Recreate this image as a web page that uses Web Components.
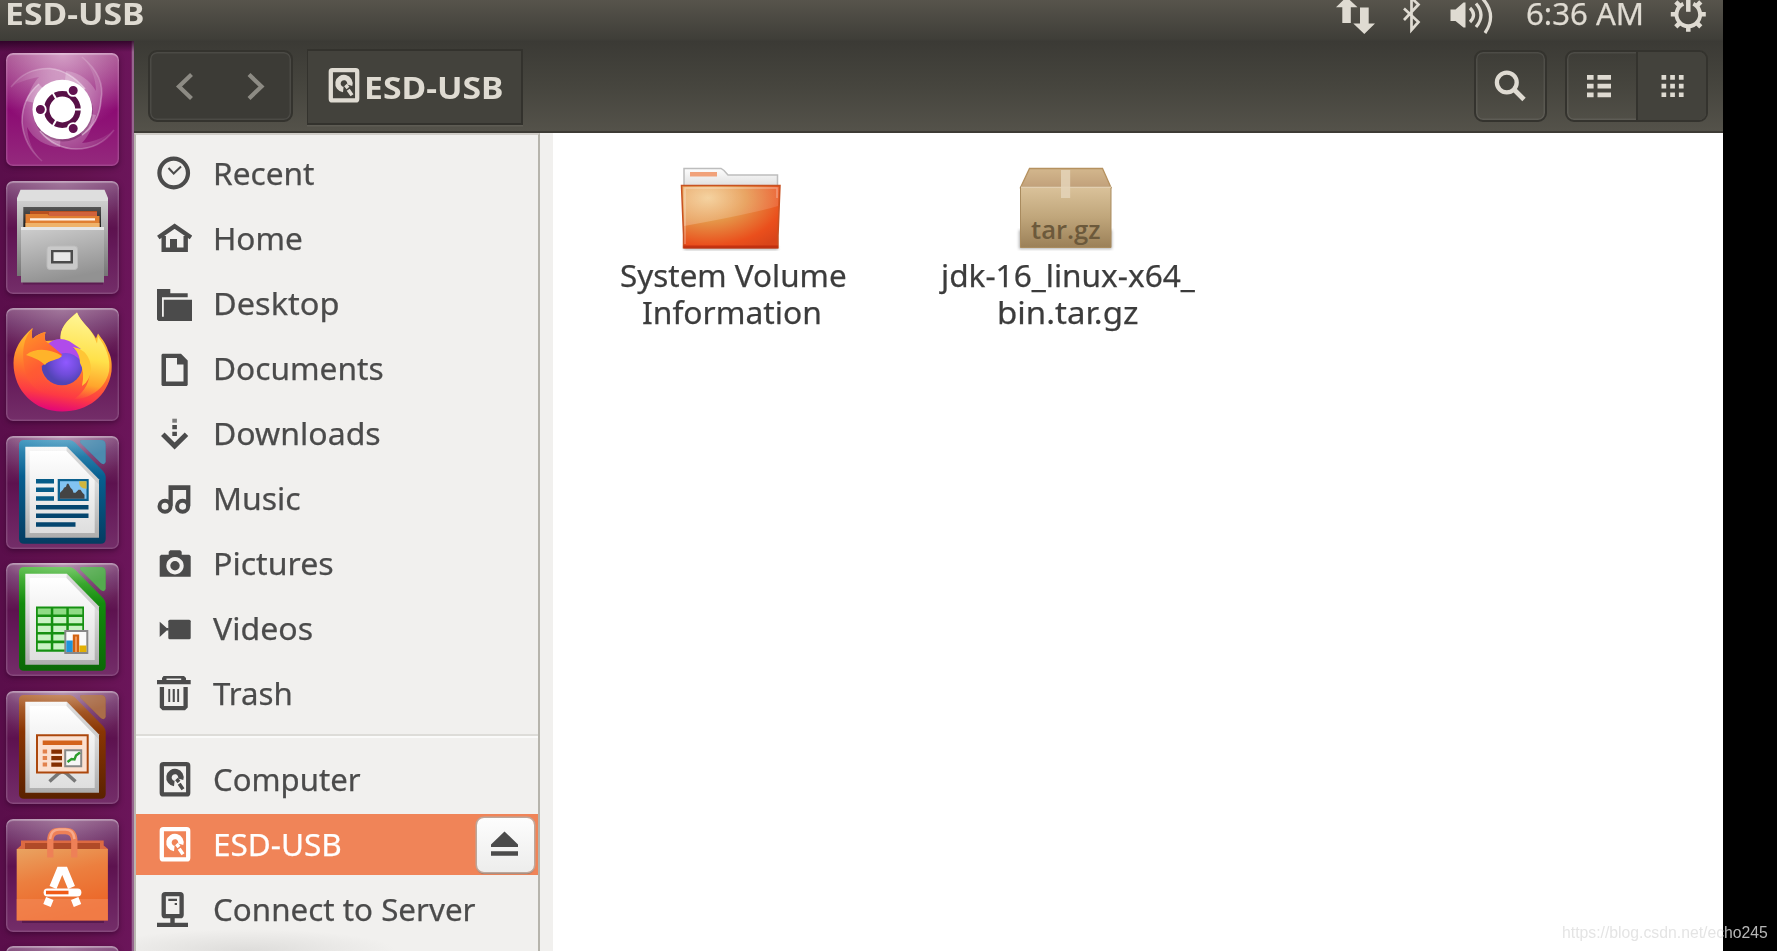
<!DOCTYPE html>
<html lang="en">
<head>
<meta charset="utf-8">
<title>ESD-USB</title>
<style>
body {
  margin: 0;
  background: #000;
  font-family: "Noto Sans", "Open Sans", sans-serif;
  font-size: 30.3px;
  color: #4b4b4b;
  overflow: hidden;
}
</style>
</head>
<body>
<desktop-screen></desktop-screen>
<script>
/*
define: registers a component from its markup
- name: tag name
- html: styles and markup for the shadow root
- setup: called with the element once its root is filled
*/
function define(name, html, setup) {
  const template = document.createElement("template");
  template.innerHTML = html;

  customElements.define(name, class extends HTMLElement {
    constructor() {
      super();
      this.attachShadow({ mode: "open" });
    }

    connectedCallback() {
      if (this.shadowRoot.childNodes.length) return;
      this.shadowRoot.appendChild(template.content.cloneNode(true));
      if (setup) setup(this, this.shadowRoot);
    }
  });
}

/*
fit-text: condenses or widens its text to a given width

atributos:
- ink: width in px from the first to the last painted pixel
*/
define("fit-text", `
<style>
:host { display: block; white-space: nowrap; line-height: 37px; }
span { display: inline-block; transform-origin: 0 50%; -webkit-text-stroke: var(--stroke, .25px); }
</style>
<span><slot></slot></span>
`, (el, root) => {
  const ink = Number(el.getAttribute("ink"));
  const style = getComputedStyle(el);
  const ctx = document.createElement("canvas").getContext("2d");
  ctx.font = `${style.fontWeight} ${style.fontSize} ${style.fontFamily}`;
  const m = ctx.measureText(el.textContent);
  const scale = ink / (m.actualBoundingBoxLeft + m.actualBoundingBoxRight);

  el.style.width = m.width * scale + "px";
  root.querySelector("span").style.transform = `scaleX(${scale})`;
});

const symbols = {
  clock: `<circle cx="16.700" cy="17" r="14.300" fill="none" stroke="currentColor" stroke-width="4.2"/>
    <path d="M11.500 12l5.200 5.500 7.300-7" fill="none" stroke="currentColor" stroke-width="2"/>`,
  home: `<path d="M1.300 16.500 17.600 5.200 34 16.500" fill="none" stroke="currentColor" stroke-width="4.300"/>
    <path d="M6.700 15v13.800h22V15" fill="none" stroke="currentColor" stroke-width="4.400"/>
    <path d="M13 18h7v12h-7z" fill="currentColor"/>`,
  desktop: `<path d="M0 3h13.300v4.300h17.400v4H5v19.400h1.800V13.700H35V35H1.500L0 33.500z" fill="currentColor"/>`,
  document: `<path fill="currentColor" fill-rule="evenodd" d="M5.500 2.700H24l6.700 6.700V34l-1 1H5.500l-1-1V3.700zM9 7v23.500h17.500V13.500H20V7z"/>`,
  download: `<path d="M15.300 2.700h4.600v4h-4.600z" fill="currentColor" opacity=".7"/>
    <path d="M15.300 9h4.600v4.200h-4.600zM15.300 15.700h4.600V20h-4.600z" fill="currentColor"/>
    <path d="M5.800 18.300 17.600 30l11.900-11.700" fill="none" stroke="currentColor" stroke-width="5"/>`,
  music: `<path d="M11.500 21V4.300h21.900v21h-4.300V9H15.800v16.300z" fill="currentColor"/>
    <circle cx="8" cy="25.300" r="5.500" fill="none" stroke="currentColor" stroke-width="4"/>
    <circle cx="25.600" cy="25.300" r="5.500" fill="none" stroke="currentColor" stroke-width="4"/>`,
  camera: `<path fill="currentColor" fill-rule="evenodd" d="M4.200 8.700h7.500V5.800l1.500-1.500h10l1.500 1.500v2.900h7.500l1.500 1.500v20.500h-31V10.200zM18 11a8.700 8.700 0 1 0 .01 0z"/>
    <circle cx="18" cy="19.700" r="4.700" fill="currentColor"/>`,
  video: `<rect x="11.300" y="8.700" width="22.400" height="19.600" rx="1.500" fill="currentColor"/>
    <path d="M2.700 10.700 9.700 17h2v2.600h-2L2.700 26z" fill="currentColor"/>`,
  trash: `<path fill="currentColor" fill-rule="evenodd" d="M6.500 0H27l2 2v2h4.700v4.300H0V4h5V2zM9.500 2.500V4h14.700V2.500z"/>
    <path d="M4.900 11v19.700l1.500 1.500h20.700l1.500-1.500V11" fill="none" stroke="currentColor" stroke-width="4.300"/>
    <path d="M11.300 13h1.900v13h-1.900zM15.700 13h2.100v13h-2.100zM20.200 13h1.900v13h-1.900z" fill="currentColor"/>`,
  disk: `<rect x="4.800" y="2.200" width="26.400" height="30.200" rx="1.500" fill="none" stroke="currentColor" stroke-width="4.300"/>
    <path d="M23.700 17.300A6 6 0 1 0 17.300 21.500" fill="none" stroke="currentColor" stroke-width="5.400"/>
    <path d="M19.500 17l2.500 3M22.200 21.800l3.800 5.400" fill="none" stroke="currentColor" stroke-width="3.600"/>`,
  server: `<rect x="6.700" y="2.200" width="17.900" height="22" rx="1.500" fill="none" stroke="currentColor" stroke-width="4.300"/>
    <path d="M11.300 6.700H20v2.200h-8.700zM17.700 10.900H20v2.200h-2.300zM13.300 25h4.400v6h-4.400zM0 30.700h31V35H0z" fill="currentColor"/>`,
  back: `<path d="M23.500 5.500 11 17.500l12.500 12" fill="none" stroke="currentColor" stroke-width="4.200"/>`,
  forward: `<path d="M11 5.500l12.500 12L11 29.500" fill="none" stroke="currentColor" stroke-width="4.200"/>`,
  search: `<circle cx="13.800" cy="13.500" r="9.900" fill="none" stroke="currentColor" stroke-width="4.300"/>
    <path d="M20.500 20l10.500 10.500" stroke="currentColor" stroke-width="4.800"/>`,
  list: `<path fill="currentColor" d="M3 6h6.600v4.700H3zM13.500 6H27v4.700H13.500zM3 14.700h6.600v4.700H3zM13.500 14.700H27v4.700H13.500zM3 23.500h6.600v4.700H3zM13.500 23.500H27v4.700H13.500z"/>`,
  grid: `<path fill="currentColor" d="M7.500 6h4.700v4.700H7.500zM16.200 6h4.700v4.700h-4.700zM24.900 6h4.700v4.700h-4.700zM7.500 14.700h4.700v4.700H7.500zM16.200 14.700h4.700v4.700h-4.700zM24.900 14.700h4.700v4.700h-4.700zM7.500 23.400h4.700v4.700H7.500zM16.200 23.400h4.700v4.700h-4.700zM24.900 23.400h4.700v4.700h-4.700z"/>`,
  eject: `<path fill="currentColor" d="M16.500 4.500 30 17.500V20H3v-2.500zM3 24.200h27v4.500H3z"/>`
};

/* symbolic-icon: name picks one of the symbols, painted with the text colour */
define("symbolic-icon", `
<style>
:host { display: block; width: 35px; height: 35px; flex: none; }
svg { display: block; }
</style>
<svg width="35" height="35" viewBox="0 0 35 35"></svg>
`, (el, root) => {
  root.querySelector("svg").innerHTML = symbols[el.getAttribute("name")] || "";
});

define("top-panel", `
<style>
:host {
  display: flex;
  height: 41px;
  box-sizing: border-box;
  padding: 0 17px 0 4.500px;
  background: linear-gradient(#57544c, #3f3e38 95%, #3c3b36);
  color: #dfdbd2;
}
fit-text { margin-top: -5px; }
.title { font-weight: 700; flex: 1; --stroke: 0; }
.clock { width: 118px; }
svg { flex: none; display: block; }
</style>
<div class="title"><fit-text ink="136">ESD-USB</fit-text></div>
<svg width="190" height="41" viewBox="1336 0 190 41" fill="currentColor">
  <path d="M1346.500-3l11 10.200h-6.700V23h-8.500V7.200h-6.300zM1360 7.500h8.700v16h6.300L1364.300 34l-11-10.500h6.700z"/>
  <path d="M1404 8.500l14.500 13.500-7 8V-2l7 6.500L1404 20" fill="none" stroke="currentColor" stroke-width="2.700"/>
  <path d="M1450.500 9.500h5L1463.500 2.500h2v25h-2l-8-6.500h-5z"/>
  <path d="M1470 8q7 7 0 14M1476 3.500q10 11.500 0 23.500M1482-2q15.500 16.500 3 35" fill="none" stroke="currentColor" stroke-width="3.200"/>
</svg>
<div class="clock"><fit-text ink="114.500">6:36 AM</fit-text></div>
<svg width="62" height="41" viewBox="1644 0 62 41">
  <g transform="translate(1688.300 14.300)" fill="none" stroke="currentColor">
    <path d="M-5-10.500A11.800 11.800 0 1 0 5-10.500" stroke-width="4"/>
    <path d="M0-15V-2.500" stroke-width="4.500"/>
    <path d="M12 0h5.500M-12 0h-5.500M0 12v5.500M8.500 8.500l4 4M-8.500 8.500l-4 4M8.500-8.500l4-4M-8.500-8.500l-4-4" stroke-width="4.500"/>
  </g>
</svg>
`);

define("launcher-tile", `
<style>
:host {
  display: block;
  width: 113px;
  height: 113px;
  flex: none;
  border-radius: 7px;
  background: radial-gradient(circle at 50% 0, rgba(255, 255, 255, .22), transparent 50%), linear-gradient(#8a5482 0, #763b70 13%, #672059 30%, #5d124f 42%, #651a59 60%, #742e69);
  box-shadow: 0 2px 5px rgba(40, 0, 35, .5), inset 0 0 0 1.500px rgba(255, 255, 255, .13), inset 0 2px 1px rgba(255, 255, 255, .25);
}
:host([bright]) {
  background:
    radial-gradient(circle at 50% 0, rgba(255, 235, 250, .55), transparent 62%),
    linear-gradient(#a04487, #8c0b73 50%, #942a7d);
}
</style>
<slot></slot>
`);

/* page shared by the three office documents, only the shade changes */
define("office-page", `
<style>
:host { display: block; }
svg { display: block; }
</style>
<svg width="113" height="113" viewBox="0 0 113 113">
  <defs>
    <linearGradient id="edge" x2="0" y2="1"><stop offset="0" stop-color="var(--light)"/><stop offset=".35" stop-color="var(--mid)"/><stop offset="1" stop-color="var(--dark)"/></linearGradient>
    <linearGradient id="rim" x2="0" y2="1"><stop stop-color="#f8f8f8"/><stop offset="1" stop-color="#adadad"/></linearGradient>
    <linearGradient id="paper" x2="0" y2="1"><stop stop-color="#fff"/><stop offset="1" stop-color="#dedede"/></linearGradient>
    <radialGradient id="shine" cx=".5" cy="0" r=".5"><stop stop-color="#fff" stop-opacity=".45"/><stop offset="1" stop-color="#fff" stop-opacity="0"/></radialGradient>
  </defs>
  <path fill="url(#edge)" d="M18 4h45.500q3 0 5.500 2.500l28 28.500q2.700 3 2.700 6v61.700q0 5-5 5H18q-5 0-5-5V9q0-5 5-5z"/>
  <path fill="var(--mid)" d="M76 4h19q4.700 0 4.700 5v17q-1.500 4-5.500.5L74.500 7q-1.500-3 1.500-3z"/>
  <path fill="#fff" opacity=".28" d="M76 4h19q4.700 0 4.700 5v17q-1.500 4-5.500.5L74.500 7q-1.500-3 1.500-3z"/>
  <path fill="url(#rim)" d="M19.300 10.700h41.500L93 43.500v58.300H19.300z"/>
  <path fill="url(#paper)" d="M23.700 15h37l28 29v53h-65z"/>
  <path fill="#bbb" opacity=".5" d="M60.800 10.700 93 43.500v5L60.500 15z"/>
  <rect width="113" height="45" fill="url(#shine)" opacity=".5"/>
  <g class="content"></g>
</svg>
`, (el, root) => {
  const kinds = {
    writer: {
      colours: ["#3c94bd", "#075f90", "#053c61"],
      art: `<path fill="#075c88" d="M30 43h18v4.500H30zM30 51.600h18v4.500H30zM30 60.300h18v4.500H30z"/>
        <path fill="#05466f" d="M30 69h52.500v4.500H30zM30 77.600h52.500v4.500H30zM30 86.300h39.500v4.500H30z"/>
        <path fill="#0c608e" d="M51.700 43h31v22h-31z"/><path fill="#82c4f2" d="M54 45.200h26.500v17.600H54z"/>
        <path fill="#d2b63d" d="M73 45.200h7.500v7.500q-7.500 0-7.500-7.500z"/>
        <path fill="#444" d="M54 62.800v-6l3-3 1-2 2-1 1-3h1.500l2 4 2 2 1 3h2l3-3h2l2 3 2 2v4z"/>`
    },
    calc: {
      colours: ["#5abe4a", "#128b0c", "#0b6706"],
      art: `<path fill="#159011" d="M30 43.600h48v45.200H30z"/>
        <path fill="#8fdc85" d="M31.800 45.400h13v6.200h-13zM47.300 45.400h13v6.200h-13zM62.800 45.400h13.500v6.200H62.800z"/>
        <path fill="#c9f3c4" d="M31.800 54h13v6.200h-13zM47.300 54h13v6.200h-13zM62.800 54h13.500v6.200H62.800zM31.800 62.700h13v6.200h-13zM47.300 62.700h13v6.200h-13zM62.800 62.700h13.500v6.200H62.800zM31.800 71.400h13v6.200h-13zM47.300 71.400h13v6.200h-13zM31.800 80.300h13v6.200h-13zM47.300 80.300h13v6.200h-13z"/>
        <path fill="#fafafa" stroke="#888" stroke-width="2" d="M59.300 68h22v22h-22z"/>
        <path fill="#1e94dc" d="M60.300 77.500h6.500V89h-6.500z"/><path fill="#d2610f" d="M66.800 71.500h6.400V89h-6.400z"/><path fill="#f09558" d="M69 73.500h2V89h-2z"/><path fill="#e2b003" d="M73.400 82.500h7V89h-7z"/>`
    },
    impress: {
      colours: ["#b8713f", "#893503", "#5a2200"],
      art: `<path d="M43.500 90.500l9-8 3-1.500h2l3 1.500 9 8" fill="none" stroke="#777" stroke-width="3.500"/>
        <path fill="#fbe0d0" stroke="#ac470c" stroke-width="2" d="M31 44.200h50.700v37.200H31z"/>
        <path fill="#d4631b" d="M36.700 49.500h39.500v4.500H36.700z"/>
        <path fill="#e2824d" d="M36.700 58.500h4.400v4h-4.400zM36.700 65h4.400v4h-4.400zM36.700 71.500h4.400v4h-4.400z"/>
        <path fill="#842f02" d="M45.300 58.500H56v4.200H45.300zM45.300 65H56v4.200H45.300zM45.300 71.500H56v4.200H45.300z"/>
        <path fill="#f6f6f6" stroke="#888" stroke-width="2" d="M59.200 59.200h16v16h-16z"/>
        <path d="M61.500 71l4-3 3 .5 1.500-4 4-3" fill="none" stroke="#2c9c2c" stroke-width="2.400"/>`
    }
  };
  const kind = kinds[el.getAttribute("kind")];
  ["--light", "--mid", "--dark"].forEach((prop, i) => el.style.setProperty(prop, kind.colours[i]));
  root.querySelector(".content").innerHTML = kind.art;
});

define("unity-launcher", `
<style>
:host {
  display: flex;
  flex-direction: column;
  gap: 14.600px;
  width: 134px;
  height: 910px;
  flex: none;
  box-sizing: border-box;
  padding: 12px 0 0 6px;
  overflow: hidden;
  background:
    linear-gradient(rgba(35, 0, 30, .75), transparent 11px),
    linear-gradient(90deg, #5a0e4b, #63124f 60%, #6b155a 98%, #96658e 98.500%);
}
svg { display: block; }
</style>
<launcher-tile bright>
  <svg width="113" height="113" viewBox="0 0 113 113">
    <defs>
      <radialGradient id="glow" gradientUnits="userSpaceOnUse" cx="56" cy="56" r="58"><stop offset=".4" stop-color="#fff" stop-opacity=".34"/><stop offset="1" stop-color="#fff" stop-opacity=".03"/></radialGradient>
      <radialGradient id="line" gradientUnits="userSpaceOnUse" cx="56" cy="56" r="60"><stop offset=".4" stop-color="#fff" stop-opacity=".5"/><stop offset="1" stop-color="#fff" stop-opacity=".08"/></radialGradient>
    </defs>
    <g fill="url(#glow)">
      <path d="M5 34C16 19 30 15 44 15.500 58 17 70 25 79 36L56 56 20 48C24 38 27 30 33 24 22 26 12 29 5 34z"/>
      <path d="M76 4C92 17 98 32 95 47 94 62 88 74 76 82L56 56 60 18C74 19 84 28 90 38 90 24 84 12 76 4z"/>
      <path d="M108 77C97 92 84 96 70 96 57 96 43 90 34 78L56 56 90 62C87 73 82 84 76 90 89 89 99 84 108 77z"/>
      <path d="M36 108C23 97 17 83 16 69 16 53 22 40 33 31L56 56 54 94C40 94 27 86 21 74 22 88 27 99 36 108z"/>
    </g>
    <g fill="none" stroke="url(#line)" stroke-width="1.600">
      <path d="M5 34C16 19 30 15 44 15.500 58 17 70 25 79 36"/>
      <path d="M76 4C92 17 98 32 95 47 94 62 88 74 76 82"/>
      <path d="M108 77C97 92 84 96 70 96 57 96 43 90 34 78"/>
      <path d="M36 108C23 97 17 83 16 69 16 53 22 40 33 31"/>
    </g>
    <circle cx="57" cy="58.500" r="30" fill="#420035" opacity=".3"/>
    <circle cx="56.300" cy="56.500" r="29.800" fill="#fff"/>
    <circle cx="56.300" cy="56.500" r="15.700" fill="none" stroke="#581047" stroke-width="5.600"/>
    <g stroke="#fff" stroke-width="2">
      <path d="M67 56.500h10"/>
      <path d="M67 56.500h10" transform="rotate(120 56.300 56.500)"/>
      <path d="M67 56.500h10" transform="rotate(240 56.300 56.500)"/>
    </g>
    <g fill="#611250" stroke="#fff" stroke-width="1.800">
      <circle cx="34.400" cy="56.500" r="5.400"/><circle cx="67.200" cy="37.500" r="5.400"/><circle cx="67.200" cy="75.500" r="5.400"/>
    </g>
  </svg>
</launcher-tile>
<launcher-tile>
  <svg width="113" height="113" viewBox="0 0 113 113">
    <defs>
      <linearGradient id="metal" x2="0" y2="1"><stop stop-color="#d2d2d2"/><stop offset="1" stop-color="#757575"/></linearGradient>
      <linearGradient id="front" x2=".3" y2="1"><stop stop-color="#cfcfcf"/><stop offset="1" stop-color="#929292"/></linearGradient>
      <linearGradient id="dark" x2="0" y2="1"><stop stop-color="#555"/><stop offset="1" stop-color="#1d1d1d"/></linearGradient>
    </defs>
    <path fill="url(#metal)" d="M11 17h91v78H11z"/>
    <path fill="#dedede" d="M14.500 8.700h84L102 17v3H11v-3z"/>
    <path fill="url(#dark)" d="M17.300 26H95v20H17.300z"/>
    <path fill="#b8501f" d="M24 30h67v6H24z"/><path fill="#d0623b" d="M43 31h48v6H43z"/>
    <path fill="#e07f32" d="M19.500 33h22l2 2h50v11h-74z"/>
    <path fill="#efb36a" d="M19.500 42h74v4h-74z"/><path fill="#fff3e8" d="M24 37.300h65v2.300H24z"/>
    <path fill="#2b0025" opacity=".3" d="M17 101h80v2.500H17z"/>
    <path fill="url(#front)" d="M15 46h83v55.500H15z"/><path fill="#e6e6e6" d="M15 46h83v3H15z"/>
    <rect x="41" y="65" width="30.500" height="23.500" rx="3" fill="#c9c9c9" stroke="#bbb"/>
    <path fill="#4b4b4b" d="M45 69h22v13.500H45z"/><path fill="#e8e8e8" d="M47.500 71.200h17v8.800h-17z"/>
  </svg>
</launcher-tile>
<launcher-tile>
  <svg width="113" height="113" viewBox="0 0 113 113">
    <defs>
      <linearGradient id="fire" x1=".6" y1=".1" x2=".45" y2="1"><stop stop-color="#ffd33c"/><stop offset=".35" stop-color="#ffa52c"/><stop offset=".6" stop-color="#ff6a30"/><stop offset=".82" stop-color="#fd3a44"/><stop offset="1" stop-color="#e20679"/></linearGradient>
      <linearGradient id="tail" x1=".3" x2=".2" y2="1"><stop stop-color="#fff697"/><stop offset=".5" stop-color="#ffe14a"/><stop offset=".8" stop-color="#ffa52c"/><stop offset="1" stop-color="#ff7a2f" stop-opacity="0"/></linearGradient>
      <radialGradient id="globe" cx=".6" cy=".45"><stop stop-color="#9059ff"/><stop offset=".6" stop-color="#704cda"/><stop offset="1" stop-color="#5144b5"/></radialGradient>
      <linearGradient id="head" x2=".5" y2="1"><stop stop-color="#ff9a26"/><stop offset=".6" stop-color="#ff5b33"/><stop offset="1" stop-color="#ff4040" stop-opacity="0"/></linearGradient>
    </defs>
    <path fill="url(#fire)" d="M26.500 20c-1 5-1 8 0 11 4-4 8-6 13-7-1 4-1 6 0 9l16-1C53 21 61 12 71 4.500c4 10 13 15 19 26l2-5c5 7 8 10 10 17 4 7 4 15 3.500 21C102 88 82 103.500 56 103.500 29 103.500 7.500 83 7.500 55 7.500 41 15 30 26.500 20z"/>
    <path fill="url(#tail)" d="M54.500 33C53 20 61 13 71 4.500c4 10 12 14 17 24l3 7 1-7c8 10 13 23 11 35-4 19-21 27-35 28C91 75 88 47 66 39z"/>
    <circle cx="56" cy="56.500" r="20.800" fill="url(#globe)"/>
    <path fill="#b04bea" d="M42 36q9-8 21-3l12 8-8-1q7 4 9 14-10-12-22-8z"/>
    <path fill="#ffc635" d="M67 39q17 3 18 22-1 12-9 17 3-15-2-23 0-9-7-16z"/>
    <path fill="url(#head)" d="M26.500 20c-1 5-1 8 0 11 4-4 8-6 13-7-1 4-1 6 0 9l10 8 7 6-9 4-12 7c0 18 16 26 34 16-13 20-43 15-50-9-5-21-2-35 7-45z"/>
    <path fill="#ffb32a" d="M20 47c10-8 25-6 36 1-3 4-14 4-17 9q-6-6-19-10z"/>
  </svg>
</launcher-tile>
<launcher-tile><office-page kind="writer"></office-page></launcher-tile>
<launcher-tile><office-page kind="calc"></office-page></launcher-tile>
<launcher-tile><office-page kind="impress"></office-page></launcher-tile>
<launcher-tile>
  <svg width="113" height="113" viewBox="0 0 113 113">
    <defs>
      <linearGradient id="bag" x2=".3" y2="1"><stop stop-color="#e9a361"/><stop offset=".45" stop-color="#ec7f3f"/><stop offset="1" stop-color="#ec6527"/></linearGradient>
    </defs>
    <path fill="#dc6a42" d="M15 21.500h82.700v5L102 30H11l4-3.500z"/>
    <path fill="#b04a28" d="M19 24h75v6H19z"/>
    <path fill="#2b0025" opacity=".35" d="M16 101h82v3H16z"/>
    <path fill="url(#bag)" d="M10.700 30h91.200v71.500H10.700z"/>
    <path fill="#f58a5a" opacity=".6" d="M10.700 80h91.200v21.500H10.700z"/>
    <path fill="none" stroke="#ee8057" stroke-width="6.300" d="M44.300 38.500V22q0-10 9-10h6q9 0 9 10v16.500"/>
    <path fill="none" stroke="#f7a98b" stroke-width="2.500" d="M44 20q1-9.500 9-9.500h6.500q8 0 9 9.500"/>
    <g stroke="#fff">
      <path fill="none" stroke-width="7.500" d="M47 68.500l7-17h4.500l7 17"/>
      <path stroke-width="8" d="M41 86.500l2.800-7M71.500 86.500l-2.800-7"/>
      <path stroke-width="7.800" stroke-linecap="round" d="M41.500 73.500h30"/>
      <path stroke="#f05a16" stroke-width="3.600" d="M40 73.500h22.500"/>
    </g>
  </svg>
</launcher-tile>
<launcher-tile></launcher-tile>
`);

define("header-bar", `
<style>
:host {
  display: flex;
  align-items: flex-start;
  height: 92px;
  box-sizing: border-box;
  padding: 9px 15px 0 14px;
  color: #dfdbd2;
  background: linear-gradient(#3b3a35, #46453e 50%, #54524a);
  border-bottom: 2px solid #3d3b35;
}
.group {
  display: flex;
  height: 72px;
  box-sizing: border-box;
  border: 2px solid #34332e;
  border-radius: 9px;
  box-shadow: inset 0 0 0 1.500px rgba(255, 255, 255, .08);
}
.group > div { flex: 1; display: flex; align-items: center; justify-content: center; }
.nav { width: 145px; background: #3c3b36; color: #8d8b84; }
.path {
  display: flex;
  align-items: center;
  gap: 3px;
  margin-left: 13.500px;
  width: 216.500px;
  height: 76px;
  margin-top: -1px;
  box-sizing: border-box;
  padding: 0 0 0 18px;
  border: 2px solid #33322d;
  border-left-width: 1px;
  background: #43423c;
  box-shadow: 0 1.500px 0 #5e5c54;
  font-weight: 700;
  --stroke: 0;
}
.path symbolic-icon { margin-top: -3px; }
.search { width: 73px; margin-left: auto; }
.views { width: 143px; margin-left: 18px; }
.views .on { background: #43423c; border-left: 2px solid #34332e; border-radius: 0 7px 7px 0; }
</style>
<div class="group nav">
  <div><symbolic-icon name="back"></symbolic-icon></div>
  <div><symbolic-icon name="forward"></symbolic-icon></div>
</div>
<div class="path"><symbolic-icon name="disk"></symbolic-icon><fit-text ink="136">ESD-USB</fit-text></div>
<div class="group search"><div><symbolic-icon name="search"></symbolic-icon></div></div>
<div class="group views">
  <div><symbolic-icon name="list"></symbolic-icon></div>
  <div class="on"><symbolic-icon name="grid"></symbolic-icon></div>
</div>
`);

/*
place-item

atributos:
- icon
- selected

slots: label, "action" at the right edge
*/
define("place-item", `
<style>
:host {
  display: flex;
  align-items: center;
  height: 61px;
  flex: none;
  padding-left: 20.500px;
  color: #4b4b4b;
}
:host([selected]) { background: #f08458; color: #fff; }
.label { margin-left: 21.500px; flex: 1; }
</style>
<symbolic-icon></symbolic-icon>
<div class="label"><slot></slot></div>
<slot name="action"></slot>
`, (el, root) => {
  const icon = root.querySelector("symbolic-icon");
  icon.setAttribute("name", el.getAttribute("icon"));
  icon.shadowRoot.querySelector("svg").innerHTML = symbols[el.getAttribute("icon")];
});

define("places-sidebar", `
<style>
:host {
  display: flex;
  flex-direction: column;
  gap: 4px;
  width: 406px;
  flex: none;
  box-sizing: border-box;
  padding-top: 8px;
  background: radial-gradient(ellipse 150px 22px at 110px 100%, #dddcda, transparent), #f1f0ee;
  border-left: 2px solid #b9b6b0;
  border-right: 2px solid #b6b4ac;
  border-top: 2px solid #d0cdc8;
  overflow: hidden;
}
hr {
  width: 100%;
  margin: 6px 0 7px;
  border: 0;
  border-top: 2px solid #dddcd8;
  border-bottom: 2px solid #fafaf9;
}
.eject {
  display: flex;
  align-items: center;
  justify-content: center;
  width: 57px;
  height: 54px;
  margin-right: 4px;
  border-radius: 7px;
  background: linear-gradient(#fdfdfd, #ededec);
  box-shadow: 0 0 0 1.500px #bba79c, 0 2px 1px #8c7a70;
  color: #4b4b4b;
}
</style>
<place-item icon="clock"><fit-text ink="99.500">Recent</fit-text></place-item>
<place-item icon="home"><fit-text ink="86.500">Home</fit-text></place-item>
<place-item icon="desktop"><fit-text ink="122.500">Desktop</fit-text></place-item>
<place-item icon="document"><fit-text ink="168">Documents</fit-text></place-item>
<place-item icon="download"><fit-text ink="165">Downloads</fit-text></place-item>
<place-item icon="music"><fit-text ink="85">Music</fit-text></place-item>
<place-item icon="camera"><fit-text ink="118">Pictures</fit-text></place-item>
<place-item icon="video"><fit-text ink="99.500">Videos</fit-text></place-item>
<place-item icon="trash"><fit-text ink="78">Trash</fit-text></place-item>
<hr>
<place-item icon="disk"><fit-text ink="147">Computer</fit-text></place-item>
<place-item icon="disk" selected><fit-text ink="126">ESD-USB</fit-text>
  <div class="eject" slot="action"><symbolic-icon name="eject"></symbolic-icon></div>
</place-item>
<place-item icon="server"><fit-text ink="262">Connect to Server</fit-text></place-item>
`);

define("file-item", `
<style>
:host {
  display: flex;
  flex-direction: column;
  align-items: center;
  width: 260px;
  color: #3c3c3c;
}
.label { display: flex; flex-direction: column; align-items: center; }
</style>
<slot name="icon"></slot>
<div class="label"><slot></slot></div>
`);

define("file-view", `
<style>
:host {
  display: flex;
  align-items: flex-start;
  gap: 74.500px;
  flex: 1;
  box-sizing: border-box;
  padding: 27px 0 0 50px;
  background: #fff;
  border-left: 13px solid #f1f0ee;
}
svg { display: block; margin-right: 4px; }
.info { margin-right: 3px; }
</style>
<file-item>
  <svg slot="icon" width="110" height="97" viewBox="0 0 110 97">
    <defs>
      <linearGradient id="back" x2="0" y2="1"><stop stop-color="#fdfdfd"/><stop offset="1" stop-color="#ddd"/></linearGradient>
      <radialGradient id="orange" cx=".27" cy=".2" r=".95"><stop stop-color="#f2c88a"/><stop offset=".4" stop-color="#e59548"/><stop offset=".8" stop-color="#ea4f1c"/><stop offset="1" stop-color="#d9451a"/></radialGradient>
      <linearGradient id="gloss" x2="1"><stop stop-color="#fff" stop-opacity=".22"/><stop offset="1" stop-color="#fff" stop-opacity=".12"/></linearGradient>
      <filter id="soft"><feGaussianBlur stdDeviation="1.500"/></filter>
    </defs>
    <path fill="#777" opacity=".5" filter="url(#soft)" d="M8 86h94v4H8z"/>
    <path fill="url(#back)" stroke="#bdbdbd" stroke-width="1.500" d="M8 28V8.500h37l3 2 4 4.500h49.500v13z"/>
    <path fill="#f1a27a" d="M14 12h27v4.500H14z"/>
    <path fill="url(#orange)" stroke="#c85222" stroke-width="1.500" d="M5.500 25.500h98.500l-2 50v12.300H7.500V75z"/>
    <path fill="none" stroke="#fff" stroke-opacity=".3" stroke-width="1.500" d="M9 84V28h92v10"/>
    <path fill="url(#gloss)" d="M7 27h96l-1 19Q75 54 8 66z"/>
    <path fill="#b8260c" opacity=".7" d="M7.500 85.500H102v3H7.500z"/>
  </svg>
  <fit-text ink="224.500">System Volume</fit-text>
  <fit-text class="info" ink="177">Information</fit-text>
</file-item>
<file-item>
  <svg slot="icon" width="107" height="97" viewBox="0 0 107 97">
    <defs>
      <linearGradient id="box" x2="0" y2="1"><stop stop-color="#dac29a"/><stop offset=".5" stop-color="#c0a67b"/><stop offset="1" stop-color="#9b8058"/></linearGradient>
      <linearGradient id="flap" x2="0" y2="1"><stop stop-color="#d3b78d"/><stop offset="1" stop-color="#c1a07a"/></linearGradient>
      <filter id="soft2"><feGaussianBlur stdDeviation="1.500"/></filter>
    </defs>
    <path fill="#555" opacity=".45" filter="url(#soft2)" d="M7 70h93v19H7z"/>
    <path fill="url(#flap)" stroke="#b5915f" stroke-width="1.300" d="M17.500 8.500h73L99 27.500H8.500z"/>
    <path fill="url(#box)" stroke="#a98b5e" stroke-width="1" d="M8.500 27h90.500v60.500H8.500z"/>
    <path fill="#f0e0c8" opacity=".7" d="M9 26.500h90V28H9z"/>
    <path fill="#e4d3b9" d="M49 10h9.200v28H49z" opacity=".85"/>
    <text x="19" y="79" textLength="69.500" lengthAdjust="spacingAndGlyphs" font-family="Open Sans, sans-serif" font-size="26" font-weight="600" fill="#6c593b">tar.gz</text>
  </svg>
  <fit-text ink="256.500">jdk-16_linux-x64_</fit-text>
  <fit-text ink="139">bin.tar.gz</fit-text>
</file-item>
`);

define("file-window", `
<style>
:host { display: flex; flex-direction: column; flex: 1; }
.body { display: flex; flex: 1; min-height: 0; }
</style>
<header-bar></header-bar>
<div class="body"><places-sidebar></places-sidebar><file-view></file-view></div>
`);

define("desktop-screen", `
<style>
:host { display: block; width: 1777px; height: 951px; position: relative; overflow: hidden; }
.screen { width: 1723px; height: 951px; display: flex; flex-direction: column; }
.work { display: flex; height: 910px; }
.mark {
  position: absolute;
  right: 9px;
  bottom: 0;
  font: 16px "Liberation Sans", sans-serif;
  color: rgba(222, 222, 222, .82);
  --stroke: 0;
}
</style>
<div class="screen">
  <top-panel></top-panel>
  <div class="work"><unity-launcher></unity-launcher><file-window></file-window></div>
</div>
<div class="mark"><fit-text ink="205">https://blog.csdn.net/echo245</fit-text></div>
`);
</script>
</body>
</html>
